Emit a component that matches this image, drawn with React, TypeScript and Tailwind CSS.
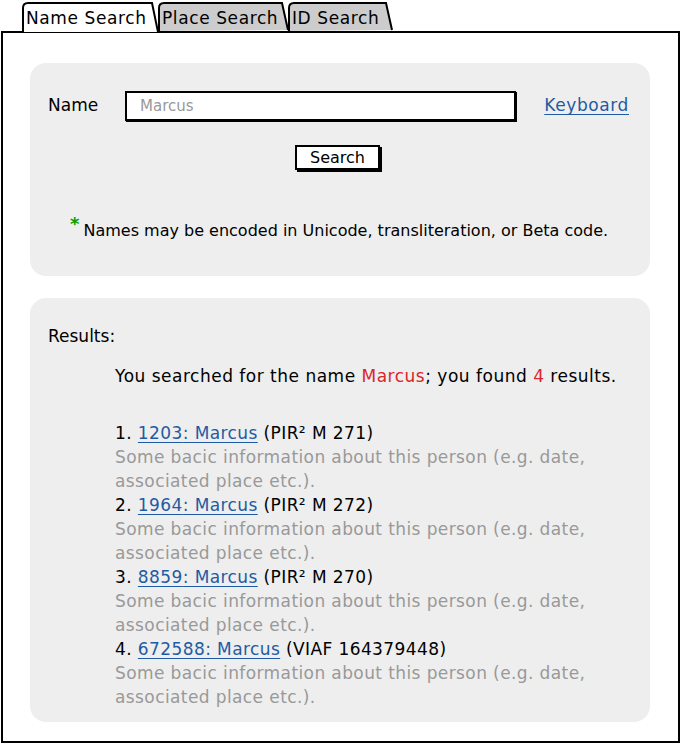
import React from 'react';

const results = [
  { n: 1, id: '1203', ref: 'PIR² M 271' },
  { n: 2, id: '1964', ref: 'PIR² M 272' },
  { n: 3, id: '8859', ref: 'PIR² M 270' },
  { n: 4, id: '672588', ref: 'VIAF 164379448' },
];

function Tab({ label, active, width, z }: { label: string; active?: boolean; width: number; z: string }) {
  return (
    <div className={`relative h-[31px] ${z}`} style={{ width }}>
      <svg className="absolute inset-0" width={width} height={31} viewBox={`0 0 ${width} 31`}>
        <path
          d={`M1 ${active ? 31 : 30} L1 7 Q1 2 6 2 L${width - 7} 2 L${width - 1} ${active ? 31 : 29}`}
          fill={active ? '#ffffff' : '#cccccc'}
          stroke="#000"
          strokeWidth="2"
        />
      </svg>
      <span className="relative block pl-[4px] pt-[6px] text-[17px] tracking-[0.6px] leading-[22px] text-black">{label}</span>
    </div>
  );
}

export default function App() {
  return (
    <div className="w-[681px] h-[745px] bg-white font-['DejaVu_Sans',sans-serif] text-[17px] text-black">
      {/* Tabs */}
      <div className="flex pl-[22px] pt-[1px] h-[33px] -mb-[2px] relative">
        <Tab label="Name Search" active width={137} z="z-30" />
        <Tab label="Place Search" width={131} z="z-10 -ml-[1px]" />
        <Tab label="ID Search" width={105} z="z-0 -ml-[1px]" />
      </div>

      {/* Frame */}
      <div className="ml-[1px] w-[679px] h-[712px] border-2 border-black pt-[30px] pl-[27px] flex flex-col gap-[22px]">
        {/* Search panel */}
        <div className="w-[620px] h-[213px] bg-[#eeeeee] rounded-[16px] pt-[28px] pl-[18px] pr-[21px]">
          <div className="flex items-center h-[30px]">
            <span className="w-[77px]">Name</span>
            <div className="w-[391px] h-[30px] border-2 border-black bg-white flex items-center pl-[13px] text-[15px] text-[#999999] shadow-[1px_1px_0_#000]">
              Marcus
            </div>
            <a className="ml-auto text-[#1f5ba3] underline underline-offset-[3px] tracking-[0.6px]">Keyboard</a>
          </div>
          <div className="flex justify-center mt-[24px] pr-[2px]">
            <button className="w-[85px] h-[25px] border-2 border-black bg-white text-[16px] leading-[20px] shadow-[2px_2px_0_#000]">
              Search
            </button>
          </div>
          <div className="mt-[49px] pl-[22px] text-[16px] flex">
            <span className="text-[#00a000] text-[18px] leading-[10px] mr-[4px] font-bold">*</span>
            <span>Names may be encoded in Unicode, transliteration, or Beta code.</span>
          </div>
        </div>

        {/* Results panel */}
        <div className="w-[620px] h-[424px] bg-[#eeeeee] rounded-[16px] pt-[26px] pl-[18px]">
          <div className="leading-[24px]">Results:</div>
          <div className="pl-[67px] mt-[16px] leading-[24px] tracking-[0.4px]">
            <div className="tracking-[0.5px]">
              You searched for the name <span className="text-[#d9262c]">Marcus</span>; you found{' '}
              <span className="text-[#d9262c]">4</span> results.
            </div>
            <div className="mt-[33px]">
              {results.map(r => (
                <div key={r.n}>
                  <div>
                    {r.n}.{' '}
                    <a className="text-[#1f5ba3] underline underline-offset-[3px]">
                      {r.id}: Marcus
                    </a>{' '}
                    ({r.ref})
                  </div>
                  <div className="text-[#999999] w-[480px]">
                    Some bacic information about this person (e.g. date, associated place etc.).
                  </div>
                </div>
              ))}
            </div>
          </div>
        </div>
      </div>
    </div>
  );
}
